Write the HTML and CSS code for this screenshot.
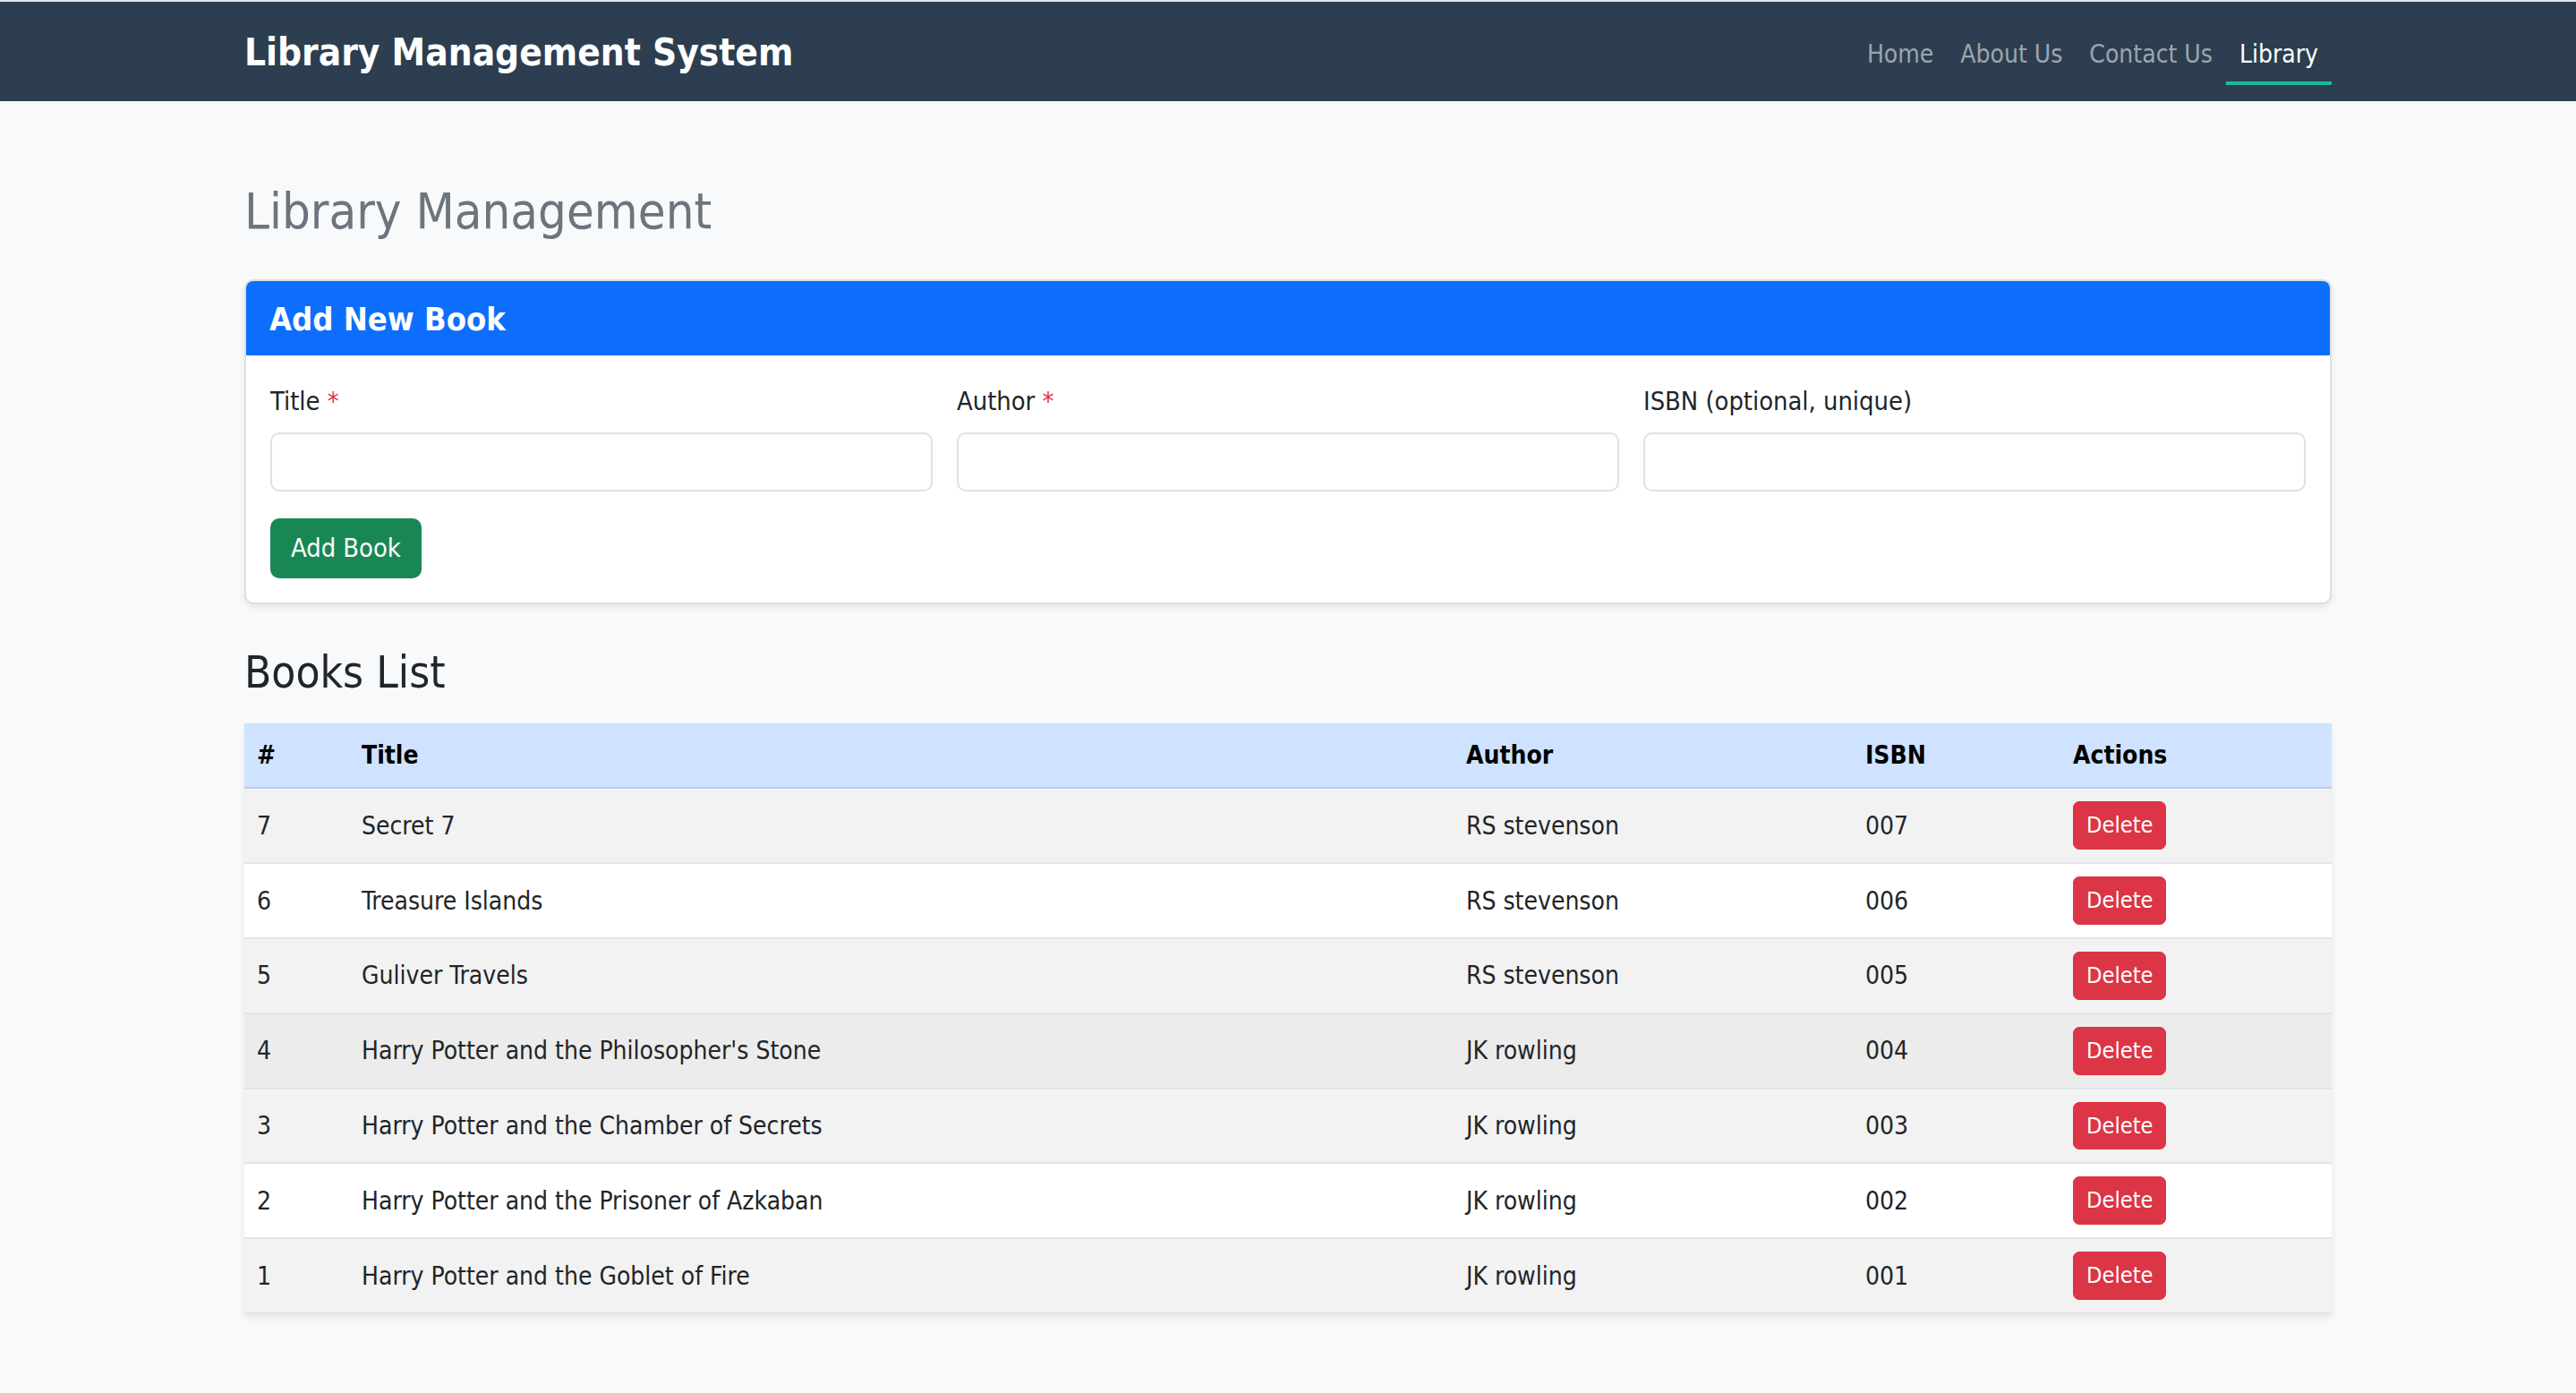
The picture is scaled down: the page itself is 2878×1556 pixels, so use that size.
FILE: index.html
```html
<!DOCTYPE html>
<html lang="en">
<head>
<meta charset="utf-8">
<title>Library Management System</title>
<link rel="stylesheet" href="styles.css">
</head>
<body>
<header class="navbar">
  <div class="navbar-inner">
    <a class="brand" href="#">Library Management System</a>
    <ul class="nav">
      <li><a class="nav-link" href="#">Home</a></li>
      <li><a class="nav-link" href="#">About Us</a></li>
      <li><a class="nav-link" href="#">Contact Us</a></li>
      <li><a class="nav-link active" href="#">Library</a></li>
    </ul>
  </div>
</header>

<main class="container">
  <h2 class="page-title">Library Management</h2>

  <section class="card">
    <div class="card-header">Add New Book</div>
    <div class="card-body">
      <div class="form-grid">
        <div class="field">
          <label class="form-label">Title <span class="req">*</span></label>
          <input class="form-control" type="text">
        </div>
        <div class="field">
          <label class="form-label">Author <span class="req">*</span></label>
          <input class="form-control" type="text">
        </div>
        <div class="field">
          <label class="form-label">ISBN (optional, unique)</label>
          <input class="form-control" type="text">
        </div>
      </div>
      <button class="btn btn-success" type="button">Add Book</button>
    </div>
  </section>

  <h3 class="section-title">Books List</h3>

  <table class="books">
    <colgroup>
      <col class="c-num"><col class="c-title"><col class="c-author"><col class="c-isbn"><col class="c-actions">
    </colgroup>
    <thead>
      <tr><th>#</th><th>Title</th><th>Author</th><th>ISBN</th><th>Actions</th></tr>
    </thead>
    <tbody>
      <tr class="odd"><td>7</td><td>Secret 7</td><td>RS stevenson</td><td>007</td><td><button class="btn-del" type="button">Delete</button></td></tr>
      <tr><td>6</td><td>Treasure Islands</td><td>RS stevenson</td><td>006</td><td><button class="btn-del" type="button">Delete</button></td></tr>
      <tr class="odd"><td>5</td><td>Guliver Travels</td><td>RS stevenson</td><td>005</td><td><button class="btn-del" type="button">Delete</button></td></tr>
      <tr class="hover"><td>4</td><td>Harry Potter and the Philosopher's Stone</td><td>JK rowling</td><td>004</td><td><button class="btn-del" type="button">Delete</button></td></tr>
      <tr class="odd"><td>3</td><td>Harry Potter and the Chamber of Secrets</td><td>JK rowling</td><td>003</td><td><button class="btn-del" type="button">Delete</button></td></tr>
      <tr><td>2</td><td>Harry Potter and the Prisoner of Azkaban</td><td>JK rowling</td><td>002</td><td><button class="btn-del" type="button">Delete</button></td></tr>
      <tr class="odd"><td>1</td><td>Harry Potter and the Goblet of Fire</td><td>JK rowling</td><td>001</td><td><button class="btn-del" type="button">Delete</button></td></tr>
    </tbody>
  </table>
</main>
</body>
</html>
```
FILE: styles.css
```css
* { box-sizing: border-box; }

html, body {
  margin: 0;
  padding: 0;
}

body {
  background: #f8f9fa;
  color: #212529;
  font-family: "DejaVu Sans Condensed", "DejaVu Sans", sans-serif;
  font-stretch: condensed;
  font-size: 28.8px;
  line-height: 1.5;
  border-top: 2px solid #e4e6ea;
}

/* Navbar */
.navbar {
  background: #2c3e50;
  height: 111px;
}

.navbar-inner {
  width: 2332px;
  margin: 0 auto;
  height: 100%;
  display: flex;
  justify-content: space-between;
  align-items: center;
}

.brand {
  color: #ffffff;
  font-weight: bold;
  font-size: 42px;
  line-height: 1.5;
  text-decoration: none;
  margin-top: 1px;
}

.nav {
  list-style: none;
  margin: 0;
  padding: 0;
  display: flex;
  align-self: stretch;
}

.nav-link {
  display: block;
  color: rgba(255, 255, 255, 0.55);
  text-decoration: none;
  font-size: 28px;
  line-height: 42px;
  padding: 38px 15px 9px;
  border-bottom: 4px solid transparent;
}

.nav-link.active {
  color: #ffffff;
  border-bottom-color: #1abc9c;
}

/* Main */
.container {
  width: 2332px;
  margin: 0 auto;
  padding: 90px 0 60px;
}

.page-title {
  margin: 0 0 42px;
  font-size: 55.8px;
  font-weight: 400;
  line-height: 1.2;
  color: #6c757d;
}

.card {
  background: #ffffff;
  border: 2px solid #dcdee1;
  border-radius: 10px;
  box-shadow: 0 4px 8px rgba(0, 0, 0, 0.075);
  overflow: hidden;
}

.card-header {
  background: #0d6efd;
  color: #ffffff;
  font-weight: bold;
  font-size: 36px;
  line-height: 1.2;
  padding: 23px 28px 19px;
  margin: -2px -2px 0;
}

.card-body {
  padding: 30px 27px 27px;
}

.form-grid {
  display: grid;
  grid-template-columns: repeat(3, 1fr);
  column-gap: 27px;
}

.form-label {
  display: block;
  margin-bottom: 13px;
}

.req {
  color: #dc3545;
}

.form-control {
  display: block;
  width: 100%;
  height: 66px;
  border: 2px solid #dee2e6;
  border-radius: 10px;
  background: #ffffff;
  font: inherit;
  padding: 0 22px;
}

.btn {
  font: inherit;
  border: 2px solid transparent;
  cursor: pointer;
}

.btn-success {
  margin-top: 30px;
  height: 67px;
  padding: 0 21px;
  background: #198754;
  color: #ffffff;
  border-radius: 10px;
}

.section-title {
  margin: 47px 0 27px;
  font-size: 49.2px;
  font-weight: 400;
  line-height: 1.2;
  color: #212529;
}

/* Table */
.books {
  width: 100%;
  border-collapse: collapse;
  table-layout: fixed;
  background: #ffffff;
  box-shadow: 0 4px 8px rgba(0, 0, 0, 0.075);
  font-size: 28px;
  line-height: 43px;
}

.c-num { width: 117px; }
.c-title { width: 1234px; }
.c-author { width: 446px; }
.c-isbn { width: 232px; }
.c-actions { width: 303px; }

.books th {
  background: #cfe2ff;
  color: #000000;
  font-weight: bold;
  text-align: left;
  padding: 14px;
  border-bottom: 2px solid #bacbe6;
}

.books td {
  padding: 14px;
  border-bottom: 2px solid #e1e4e8;
  vertical-align: middle;
}

.books tr.odd td {
  background: #f2f2f2;
}

.books tr.hover td {
  background: #ececec;
}

.btn-del {
  font: inherit;
  font-size: 25.2px;
  line-height: 37.8px;
  padding: 7px 14px;
  border: 1px solid #dc3545;
  border-radius: 7px;
  background: #dc3545;
  color: #ffffff;
  cursor: pointer;
  display: block;
}
```
